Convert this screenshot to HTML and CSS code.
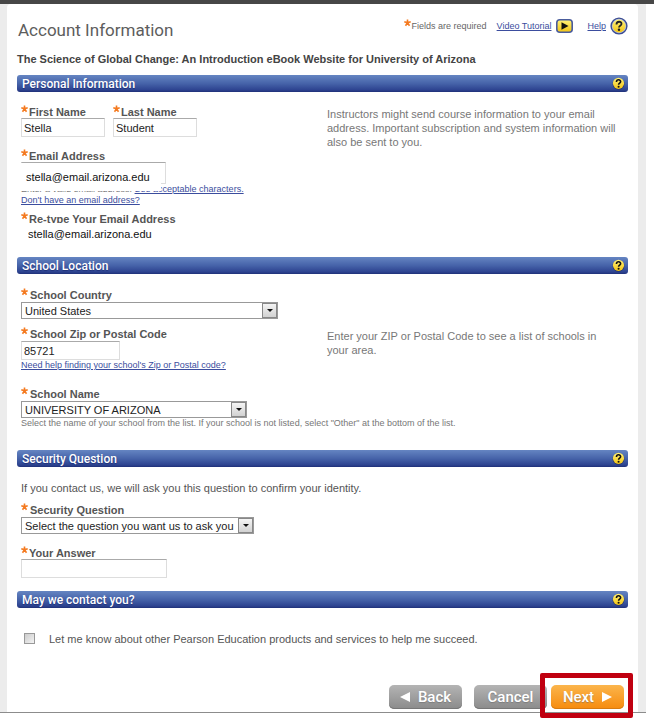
FILE: index.html
```html
<!DOCTYPE html>
<html lang="en">
<head>
<meta charset="utf-8">
<title>Account Information</title>
<link rel="stylesheet" href="styles.css">
</head>
<body>
<svg class="defs" aria-hidden="true">
  <defs>
    <linearGradient id="gold" x1="0" y1="0" x2="0" y2="1"><stop offset="0" stop-color="#fff27a"/><stop offset="1" stop-color="#f2c414"/></linearGradient>
    <symbol id="star" viewBox="0 0 8 8"><path d="M3.500 3.800V.4M3.500 3.800L.3 2.700M3.500 3.800L6.700 2.700M3.500 3.800L1.500 6.700M3.500 3.800L5.500 6.700" fill="none" stroke="#f47a20" stroke-width="1.600"/></symbol>
    <symbol id="question" viewBox="0 0 14 14"><circle cx="7" cy="7.400" r="6.400" fill="#26346c"/><circle cx="7" cy="6.800" r="6" fill="url(#gold)"/><path d="M4.800 5.300C4.800 2.300 9.500 2.400 9.300 5C9.200 6.600 7.100 6.600 7.100 8.300" fill="none" stroke="#111" stroke-width="1.700"/><circle cx="7.100" cy="10.400" r="1.100" fill="#111"/></symbol>
  </defs>
</svg>
<form class="page">
  <main class="panel">
    <header class="top">
      <h1>Account Information</h1>
      <div class="tools">
        <span class="required"><svg class="star"><use href="#star"/></svg>Fields are required</span>
        <a class="tool" href="#video">Video Tutorial</a>
        <svg class="play" viewBox="0 0 17 14"><rect x=".8" y=".8" width="15.400" height="12.400" rx="3" fill="url(#gold)" stroke="#4a5c9c" stroke-width="1.600"/><path d="M5.500 3.300L12.500 7L5.500 10.700Z" fill="#111"/></svg>
        <a class="tool" href="#help">Help</a>
        <svg class="help-big" viewBox="0 0 18 18"><circle cx="9" cy="9" r="8.600" fill="#3a4b92"/><circle cx="9" cy="9" r="7.200" fill="#b8c3df"/><circle cx="9" cy="9" r="6.500" fill="url(#gold)"/><path d="M6.500 7.500C6.500 3.800 11.700 4 11.500 7C11.300 8.800 9 8.800 9 10.500" fill="none" stroke="#222" stroke-width="1.800"/><circle cx="9" cy="12.800" r="1.200" fill="#222"/></svg>
      </div>
    </header>
    <p class="product">The Science of Global Change: An Introduction eBook Website for University of Arizona</p>

    <section>
      <div class="bar"><h2>Personal Information</h2><button type="button" aria-label="Help with personal information"><svg><use href="#question"/></svg></button></div>
      <div class="body personal">
        <div class="fields">
          <div class="names">
            <div class="field"><label for="first"><svg class="star"><use href="#star"/></svg>First Name</label><input class="box" id="first" value="Stella"></div>
            <div class="field"><label for="last"><svg class="star"><use href="#star"/></svg>Last Name</label><input class="box" id="last" value="Student"></div>
          </div>
          <div class="field email">
            <label for="email"><svg class="star"><use href="#star"/></svg>Email Address</label>
            <div class="box frame"></div>
            <p class="hint">Enter a valid email address. <a href="#characters">See acceptable characters.</a></p>
            <p class="hint"><a href="#noemail">Don't have an email address?</a></p>
            <input class="cover" id="email" value="stella@email.arizona.edu">
          </div>
          <div class="field retype">
            <label for="email2"><svg class="star"><use href="#star"/></svg>Re-type Your Email Address</label>
            <input class="cover" id="email2" value="stella@email.arizona.edu">
          </div>
        </div>
        <p class="note">Instructors might send course information to your email address. Important subscription and system information will also be sent to you.</p>
      </div>
    </section>

    <section>
      <div class="bar"><h2>School Location</h2><button type="button" aria-label="Help with school location"><svg><use href="#question"/></svg></button></div>
      <div class="body school">
        <div class="fields">
          <div class="field"><label class="wide" for="country"><svg class="star"><use href="#star"/></svg>School Country</label><div class="drop country"><select id="country"><option>United States</option></select></div></div>
          <div class="field zip"><label class="wide" for="zip"><svg class="star"><use href="#star"/></svg>School Zip or Postal Code</label><input class="box" id="zip" value="85721"><p class="hint"><a href="#zip-help">Need help finding your school's Zip or Postal code?</a></p></div>
          <div class="field"><label class="wide" for="school"><svg class="star"><use href="#star"/></svg>School Name</label><div class="drop school-name"><select id="school"><option>UNIVERSITY OF ARIZONA</option></select></div><p class="hint">Select the name of your school from the list. If your school is not listed, select "Other" at the bottom of the list.</p></div>
        </div>
        <p class="note">Enter your ZIP or Postal Code to see a list of schools in your area.</p>
      </div>
    </section>

    <section>
      <div class="bar"><h2>Security Question</h2><button type="button" aria-label="Help with security question"><svg><use href="#question"/></svg></button></div>
      <div class="body security">
        <p class="intro">If you contact us, we will ask you this question to confirm your identity.</p>
        <div class="field"><label class="wide" for="question-list"><svg class="star"><use href="#star"/></svg>Security Question</label><div class="drop question-drop"><select id="question-list"><option>Select the question you want us to ask you</option></select></div></div>
        <div class="field answer"><label for="answer"><svg class="star"><use href="#star"/></svg>Your Answer</label><input class="box" id="answer"></div>
      </div>
    </section>

    <section>
      <div class="bar"><h2>May we contact you?</h2><button type="button" aria-label="Help with contact choice"><svg><use href="#question"/></svg></button></div>
      <div class="contact"><input type="checkbox" id="contact"><label for="contact">Let me know about other Pearson Education products and services to help me succeed.</label></div>
    </section>

    <footer class="actions">
      <button class="btn" type="button"><svg viewBox="0 0 10 10"><path d="M10 0V10L0 5Z" fill="#fff"/></svg>Back</button>
      <button class="btn" type="button">Cancel</button>
      <div class="spot"><button class="btn next" type="submit">Next<svg viewBox="0 0 10 10"><path d="M0 0V10L10 5Z" fill="#fff"/></svg></button></div>
    </footer>
  </main>
</form>
</body>
</html>
```
FILE: styles.css
```css
*, *::before, *::after { box-sizing: border-box; }
body { margin: 0; min-height: 100vh; padding-bottom: 13px; background: #fff; color: #444; font: 11px/14px "Liberation Sans", Arial, sans-serif; }
h1, h2, p { margin: 0; }
input, select, button { font: inherit; }
a { color: #3b4d9e; }
.defs { position: absolute; width: 0; height: 0; }

.page { border-top: 4px solid #474747; background: linear-gradient(to right, #ececec calc(100% - 8px), #fff 0); padding: 0 16px 0 7px; }
.page::after { content: ""; display: block; height: 1px; margin: 0 -8px 0 -7px; background: #8c8c8c; }
.panel { background: #fff; border-radius: 4px 4px 0 0; padding: 12px 10px 0; }

.top { display: flex; justify-content: space-between; height: 36px; }
h1 { font: 400 17px/28px Roboto, sans-serif; color: #5d5d5d; padding-left: 1px; }
.tools { display: flex; align-items: center; height: 20px; font-size: 9px; color: #666; }
.required { display: flex; align-items: center; margin-right: 10px; }
.play { width: 17px; height: 14px; margin: 0 14px 0 5px; }
.help-big { width: 18px; height: 18px; margin-left: 4px; }
.star { width: 8px; height: 8px; flex: none; align-self: flex-start; }
.product { font-weight: 700; height: 23px; color: #444; }

.bar { display: flex; align-items: center; justify-content: space-between; height: 17px; padding: 0 3px 0 5px; border-radius: 3px; background: linear-gradient(#6585c2, #4663a9 50%, #2d4390 88%, #1f3078); }
h2 { font: 500 12px/16px Roboto, sans-serif; color: #fff; text-shadow: 0 1px 1px #1f3078; }
.bar button { padding: 0; border: 0; background: none; width: 13px; height: 13px; }
.bar button svg { display: block; width: 13px; height: 13px; }

.body { padding-left: 4px; }
.personal, .school { display: grid; grid-template-columns: 306px 1fr; }
.personal { height: 165px; padding-top: 13px; }
.school { height: 176px; padding-top: 14px; }
.note { color: #777; padding-right: 8px; }
.personal .note { padding-top: 2px; }
.school .note { padding-top: 41px; }

.names { display: flex; gap: 8px; height: 44px; }
.names .box { width: 84px; }
.field { position: relative; }
.field label { display: flex; height: 13px; line-height: 14px; font-weight: 700; color: #555; }
.field .wide { gap: 1px; height: 14px; line-height: 15px; }
.box { display: block; height: 19px; border: 1px solid #ddd; border-top-color: #aaa; background: #fff; padding: 0 2px; color: #222; }
.email { height: 63px; }
.frame { width: 145px; height: 22px; }
.hint { font-size: 9px; line-height: 11px; color: #777; white-space: nowrap; }
.cover { position: absolute; left: 0; top: 14px; width: 140px; height: 28px; border: 0; padding: 0 0 1px 5px; background: #fff; color: #111; }
.retype .cover { left: 2px; top: 11px; height: 24px; padding-bottom: 2px; }

.drop { position: relative; height: 17px; border: 1px solid #999; }
.drop select { display: block; width: 100%; height: 15px; border: 0; padding: 0 18px 0 3px; appearance: none; background: #fff; color: #222; }
.drop::before { content: ""; position: absolute; right: 0; top: 0; width: 15px; height: 15px; border: 1px solid #888; background: linear-gradient(#f4f4f4, #d2d2d2); pointer-events: none; }
.drop::after { content: ""; position: absolute; right: 4px; top: 6px; border: solid transparent; border-width: 3px 3px 0; border-top-color: #111; pointer-events: none; }
.country { width: 257px; }
.school-name { width: 226px; }
.question-drop { width: 233px; }
.zip { height: 60px; margin-top: 8px; }
.zip .box { width: 99px; }

.security { height: 124px; padding-top: 14px; }
.intro { height: 22px; color: #555; }
.answer { margin-top: 12px; }
.answer .box { width: 146px; }

.contact { display: flex; align-items: center; height: 61px; padding-left: 7px; color: #555; }
.contact input { appearance: none; width: 11px; height: 11px; margin: 0 14px 0 0; border: 1px solid #999; background: linear-gradient(135deg, #ccc, #f3f3f3); }

.actions { display: flex; justify-content: flex-end; align-items: flex-end; gap: 12px; height: 43px; padding-bottom: 3px; margin-right: 4px; }
.btn { display: flex; align-items: center; justify-content: center; gap: 8px; width: 73px; height: 24px; padding: 0; border: 0; border-radius: 5px; background: linear-gradient(#b4b4b4, #8b8b8b); box-shadow: inset 0 -1px #777; color: #fff; font: 500 15px/20px Roboto, sans-serif; text-shadow: 0 1px 1px #6668; }
.btn svg { width: 10px; height: 10px; }
.next { background: linear-gradient(#fbb54c, #f68b0e); box-shadow: inset 0 -1px #d87b10; }
.spot { position: relative; margin-left: -8px; }
.spot::after { content: ""; position: absolute; inset: -12px -9px -9px -11px; border: 5px solid #c00010; border-radius: 2px; pointer-events: none; }
```
